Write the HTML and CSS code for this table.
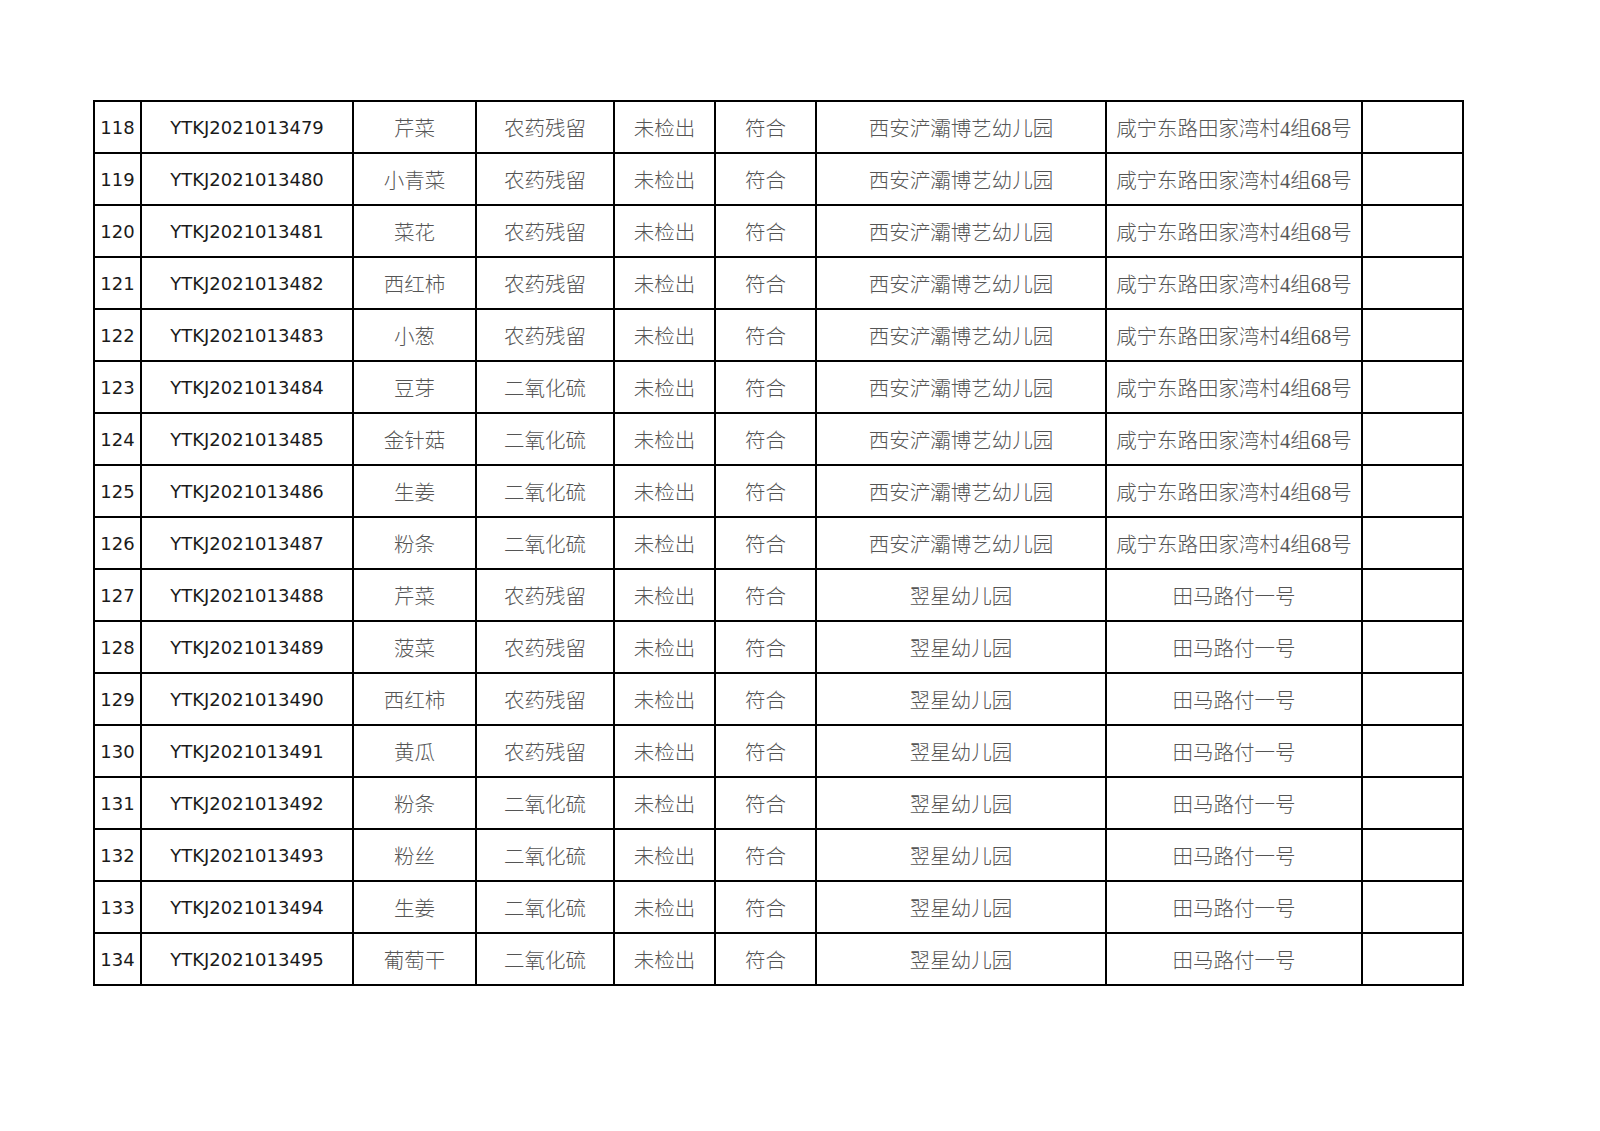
FILE: index.html
```html
<!DOCTYPE html>
<html lang="zh">
<head>
<meta charset="utf-8">
<link rel="stylesheet" href="styles.css">
</head>
<body>
<table class="grid">
<colgroup>
<col class="c1"><col class="c2"><col class="c3"><col class="c4"><col class="c5"><col class="c6"><col class="c7"><col class="c8"><col class="c9">
</colgroup>
<tbody>
<tr><td class="num">118</td><td class="num">YTKJ2021013479</td><td>芹菜</td><td>农药残留</td><td>未检出</td><td>符合</td><td>西安浐灞博艺幼儿园</td><td>咸宁东路田家湾村4组68号</td><td></td></tr>
<tr><td class="num">119</td><td class="num">YTKJ2021013480</td><td>小青菜</td><td>农药残留</td><td>未检出</td><td>符合</td><td>西安浐灞博艺幼儿园</td><td>咸宁东路田家湾村4组68号</td><td></td></tr>
<tr><td class="num">120</td><td class="num">YTKJ2021013481</td><td>菜花</td><td>农药残留</td><td>未检出</td><td>符合</td><td>西安浐灞博艺幼儿园</td><td>咸宁东路田家湾村4组68号</td><td></td></tr>
<tr><td class="num">121</td><td class="num">YTKJ2021013482</td><td>西红柿</td><td>农药残留</td><td>未检出</td><td>符合</td><td>西安浐灞博艺幼儿园</td><td>咸宁东路田家湾村4组68号</td><td></td></tr>
<tr><td class="num">122</td><td class="num">YTKJ2021013483</td><td>小葱</td><td>农药残留</td><td>未检出</td><td>符合</td><td>西安浐灞博艺幼儿园</td><td>咸宁东路田家湾村4组68号</td><td></td></tr>
<tr><td class="num">123</td><td class="num">YTKJ2021013484</td><td>豆芽</td><td>二氧化硫</td><td>未检出</td><td>符合</td><td>西安浐灞博艺幼儿园</td><td>咸宁东路田家湾村4组68号</td><td></td></tr>
<tr><td class="num">124</td><td class="num">YTKJ2021013485</td><td>金针菇</td><td>二氧化硫</td><td>未检出</td><td>符合</td><td>西安浐灞博艺幼儿园</td><td>咸宁东路田家湾村4组68号</td><td></td></tr>
<tr><td class="num">125</td><td class="num">YTKJ2021013486</td><td>生姜</td><td>二氧化硫</td><td>未检出</td><td>符合</td><td>西安浐灞博艺幼儿园</td><td>咸宁东路田家湾村4组68号</td><td></td></tr>
<tr><td class="num">126</td><td class="num">YTKJ2021013487</td><td>粉条</td><td>二氧化硫</td><td>未检出</td><td>符合</td><td>西安浐灞博艺幼儿园</td><td>咸宁东路田家湾村4组68号</td><td></td></tr>
<tr><td class="num">127</td><td class="num">YTKJ2021013488</td><td>芹菜</td><td>农药残留</td><td>未检出</td><td>符合</td><td>翌星幼儿园</td><td>田马路付一号</td><td></td></tr>
<tr><td class="num">128</td><td class="num">YTKJ2021013489</td><td>菠菜</td><td>农药残留</td><td>未检出</td><td>符合</td><td>翌星幼儿园</td><td>田马路付一号</td><td></td></tr>
<tr><td class="num">129</td><td class="num">YTKJ2021013490</td><td>西红柿</td><td>农药残留</td><td>未检出</td><td>符合</td><td>翌星幼儿园</td><td>田马路付一号</td><td></td></tr>
<tr><td class="num">130</td><td class="num">YTKJ2021013491</td><td>黄瓜</td><td>农药残留</td><td>未检出</td><td>符合</td><td>翌星幼儿园</td><td>田马路付一号</td><td></td></tr>
<tr><td class="num">131</td><td class="num">YTKJ2021013492</td><td>粉条</td><td>二氧化硫</td><td>未检出</td><td>符合</td><td>翌星幼儿园</td><td>田马路付一号</td><td></td></tr>
<tr><td class="num">132</td><td class="num">YTKJ2021013493</td><td>粉丝</td><td>二氧化硫</td><td>未检出</td><td>符合</td><td>翌星幼儿园</td><td>田马路付一号</td><td></td></tr>
<tr><td class="num">133</td><td class="num">YTKJ2021013494</td><td>生姜</td><td>二氧化硫</td><td>未检出</td><td>符合</td><td>翌星幼儿园</td><td>田马路付一号</td><td></td></tr>
<tr><td class="num">134</td><td class="num">YTKJ2021013495</td><td>葡萄干</td><td>二氧化硫</td><td>未检出</td><td>符合</td><td>翌星幼儿园</td><td>田马路付一号</td><td></td></tr>
</tbody>
</table>
</body>
</html>
```
FILE: styles.css
```css
html, body {
  margin: 0;
  padding: 0;
  background: #ffffff;
}
body {
  padding: 100px 0 0 93px;
}
.grid {
  border-collapse: collapse;
  table-layout: fixed;
  width: 1371px;
  font-family: "Liberation Serif", "Noto Sans CJK SC", serif;
  font-size: 20.5px;
  color: #555555;
}
.c1 { width: 47px; }
.c2 { width: 212px; }
.c3 { width: 123px; }
.c4 { width: 138px; }
.c5 { width: 101px; }
.c6 { width: 101px; }
.c7 { width: 290px; }
.c8 { width: 256px; }
.c9 { width: 101px; }
.grid td {
  border: 2px solid #000;
  height: 50px;
  padding: 0;
  text-align: center;
  vertical-align: middle;
  white-space: nowrap;
  overflow: hidden;
  font-weight: 300;
}
.grid td.num {
  font-family: "DejaVu Sans", "Liberation Sans", sans-serif;
  font-size: 18px;
  color: #1a1a1a;
  font-weight: 400;
}
```
